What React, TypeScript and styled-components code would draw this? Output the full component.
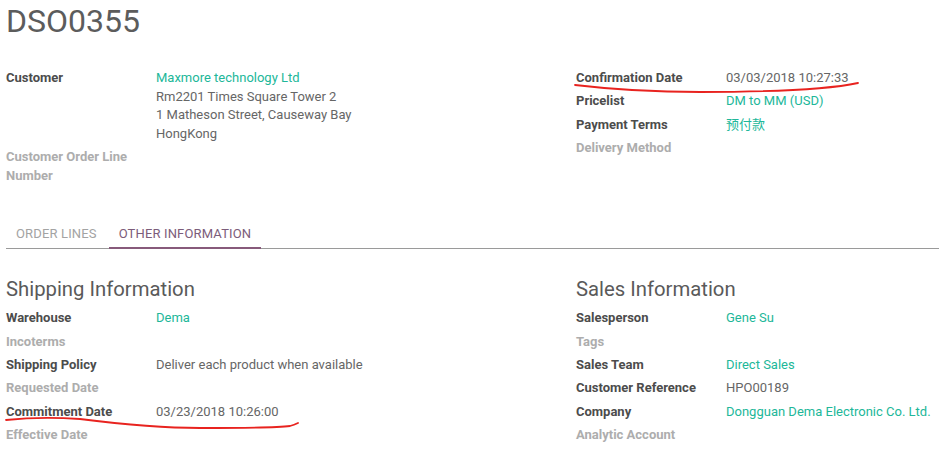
import React from "react";
import styled, { createGlobalStyle } from "styled-components";

const GlobalStyle = createGlobalStyle`
  html, body {
    margin: 0;
    padding: 0;
    background: #ffffff;
    overflow: hidden;
  }
  body {
    font-family: Roboto, "Noto Sans", "Noto Sans CJK SC", sans-serif;
    font-size: 13px;
    line-height: 1.42857;
    color: #666666;
  }
`;

const Page = styled.div`
  position: relative;
  width: 939px;
  height: 451px;
  padding-left: 6px;
  box-sizing: border-box;
  overflow: hidden;
`;

const Title = styled.h1`
  margin: 2px 0 0 0;
  font-size: 32px;
  font-weight: 400;
  line-height: normal;
  color: #5c5c5c;
`;

const Columns = styled.div<{ $top: number }>`
  display: grid;
  grid-template-columns: 570px 1fr;
  margin-top: ${(p) => p.$top}px;
`;

const Column = styled.div`
  display: flex;
  flex-direction: column;
`;

const FieldTable = styled.div`
  display: grid;
  grid-template-columns: 150px 1fr;
  row-gap: 4.85px;
`;

const Label = styled.div<{ $empty?: boolean }>`
  font-weight: 700;
  color: ${(p) => (p.$empty ? "#adadad" : "#4c4c4c")};
  padding-right: 16px;
`;

const Value = styled.div<{ $link?: boolean }>`
  color: ${(p) => (p.$link ? "#21b799" : "#666666")};
  white-space: nowrap;
`;

const Tabs = styled.nav`
  display: flex;
  margin-top: 29px;
  border-bottom: 1px solid #9a9a9a;
  height: 35px;
  box-sizing: border-box;
`;

const Tab = styled.div<{ $active?: boolean }>`
  padding: 11px 10px 0 10px;
  margin-right: 2px;
  font-size: 13px;
  letter-spacing: 0.15px;
  text-transform: uppercase;
  color: ${(p) => (p.$active ? "#7c5c7a" : "#a3a3a3")};
  border-bottom: 2px solid ${(p) => (p.$active ? "#875a7b" : "transparent")};
  margin-bottom: -1px;
`;

const Heading = styled.h2`
  margin: 0 0 9px 0;
  font-size: 20.3px;
  font-weight: 400;
  line-height: 22px;
  color: #5a5a5a;
`;

const Annotation = styled.svg`
  position: absolute;
  left: 0;
  top: 0;
  pointer-events: none;
`;

type Field = { label: string; value?: React.ReactNode; link?: boolean };

const Fields: React.FC<{ fields: Field[] }> = ({ fields }) => (
  <FieldTable>
    {fields.map((f, i) => (
      <React.Fragment key={i}>
        <Label $empty={f.value === undefined}>{f.label}</Label>
        <Value $link={f.link}>{f.value ?? ""}</Value>
      </React.Fragment>
    ))}
  </FieldTable>
);

const Address = styled.div`
  display: flex;
  flex-direction: column;
`;

const Link = styled.span`
  color: #21b799;
`;

export default function App() {
  return (
    <>
      <GlobalStyle />
      <Page>
        <Title>DSO0355</Title>
        <Columns $top={29}>
          <Column>
            <Fields
              fields={[
                {
                  label: "Customer",
                  value: (
                    <Address>
                      <Link>Maxmore technology Ltd</Link>
                      <span>Rm2201 Times Square Tower 2</span>
                      <span>1 Matheson Street, Causeway Bay</span>
                      <span>HongKong</span>
                    </Address>
                  ),
                },
                { label: "Customer Order Line Number" },
              ]}
            />
          </Column>
          <Column>
            <Fields
              fields={[
                { label: "Confirmation Date", value: "03/03/2018 10:27:33" },
                { label: "Pricelist", value: "DM to MM (USD)", link: true },
                { label: "Payment Terms", value: "预付款", link: true },
                { label: "Delivery Method" },
              ]}
            />
          </Column>
        </Columns>

        <Tabs>
          <Tab>Order Lines</Tab>
          <Tab $active>Other Information</Tab>
        </Tabs>

        <Columns $top={29}>
          <Column>
            <Heading>Shipping Information</Heading>
            <Fields
              fields={[
                { label: "Warehouse", value: "Dema", link: true },
                { label: "Incoterms" },
                { label: "Shipping Policy", value: "Deliver each product when available" },
                { label: "Requested Date" },
                { label: "Commitment Date", value: "03/23/2018 10:26:00" },
                { label: "Effective Date" },
              ]}
            />
          </Column>
          <Column>
            <Heading>Sales Information</Heading>
            <Fields
              fields={[
                { label: "Salesperson", value: "Gene Su", link: true },
                { label: "Tags" },
                { label: "Sales Team", value: "Direct Sales", link: true },
                { label: "Customer Reference", value: "HPO00189" },
                { label: "Company", value: "Dongguan Dema Electronic Co. Ltd.", link: true },
                { label: "Analytic Account" },
              ]}
            />
          </Column>
        </Columns>

        <Annotation width={939} height={451} viewBox="0 0 939 451">
          <path
            d="M575 85 C 600 88, 640 92, 700 92 C 770 92, 830 89, 858 83"
            fill="none"
            stroke="#e8231f"
            strokeWidth={1.8}
            strokeLinecap="round"
          />
          <path
            d="M6 420 C 25 418, 50 417, 80 419 C 120 424, 160 428, 200 428 C 240 428, 275 428, 290 426 C 294 425, 296 424, 298 423"
            fill="none"
            stroke="#e8231f"
            strokeWidth={1.8}
            strokeLinecap="round"
          />
        </Annotation>
      </Page>
    </>
  );
}
